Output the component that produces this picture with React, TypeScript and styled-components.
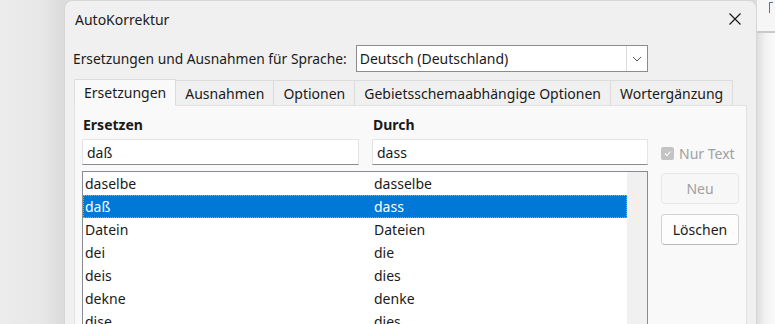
import React from "react";
import styled, { createGlobalStyle } from "styled-components";

const Global = createGlobalStyle`
  html, body { margin: 0; padding: 0; }
  body {
    width: 775px; height: 324px; overflow: hidden;
    font-family: "Noto Sans", "Open Sans", sans-serif;
    font-size: 14px; color: #1a1a1a;
    background: #ebebeb;
  }
`;

const Page = styled.div`
  display: flex;
  width: 775px;
  height: 324px;
  overflow: hidden;
  background: linear-gradient(90deg, #ececec 0px, #e8e8e8 40px, #dcdcdc 62px);
`;

const LeftGap = styled.div`
  width: 64px;
  flex: none;
`;

const Dialog = styled.div`
  width: 693px;
  flex: none;
  height: 340px;
  background: #f0f0f0;
  border: 1px solid #d6d6d6;
  border-bottom: none;
  border-radius: 8px 8px 0 0;
  box-sizing: border-box;
  display: flex;
  flex-direction: column;
`;

const Backdrop = styled.div`
  flex: 1;
  display: flex;
  flex-direction: column;
  background: linear-gradient(90deg, #dedede 0px, #f2f2f2 8px, #fafafa 18px);
`;

const BackdropTop = styled.div`
  height: 33px;
  border-bottom: 2px solid #c9c9c9;
  background: #f6f6f6;
  display: flex;
  justify-content: flex-end;
  padding: 2px 2px 0 0;
  box-sizing: border-box;
`;

const BlueMark = styled.div`
  width: 3px;
  height: 10px;
  border-left: 1px solid #3a78c8;
  border-top: 1px solid #3a78c8;
`;

const TitleBar = styled.div`
  height: 36px;
  display: flex;
  align-items: center;
  justify-content: space-between;
  padding: 0 14px 0 10px;
  flex: none;
`;

const Title = styled.span`
  font-size: 14px;
  color: #1a1a1a;
`;

const CloseBtn = styled.span`
  display: flex;
  width: 14px;
  height: 14px;
`;

const Body = styled.div`
  padding: 8px 9px 0 9px;
  display: flex;
  flex-direction: column;
`;

const LangRow = styled.div`
  display: flex;
  align-items: center;
  gap: 9px;
  height: 27px;
`;

const LangLabel = styled.span`
  font-size: 13.8px;
  margin-left: -1px;
`;

const Select = styled.div`
  width: 292px;
  height: 27px;
  box-sizing: border-box;
  border: 1px solid #8c8c8c;
  background: #fff;
  display: flex;
  align-items: stretch;
`;

const SelectText = styled.span`
  flex: 1;
  padding-left: 3px;
  display: flex;
  align-items: center;
`;

const SelectBtn = styled.span`
  width: 20px;
  border-left: 1px solid #dadada;
  display: flex;
  align-items: center;
  justify-content: center;
`;

const Tabs = styled.div`
  display: flex;
  margin-top: 8px;
  height: 25px;
  align-items: flex-end;
`;

const Tab = styled.div<{ $active?: boolean }>`
  height: ${(p) => (p.$active ? 27 : 25)}px;
  box-sizing: border-box;
  padding: 0 9px;
  display: flex;
  align-items: center;
  border: 1px solid #dcdcdc;
  border-left: ${(p) => (p.$active ? "1px solid #dcdcdc" : "none")};
  border-bottom: ${(p) => (p.$active ? "1px solid #f9f9f9" : "none")};
  background: ${(p) => (p.$active ? "#f9f9f9" : "#f0f0f0")};
  margin-bottom: ${(p) => (p.$active ? -1 : 0)}px;
  position: relative;
  z-index: ${(p) => (p.$active ? 1 : 0)};
`;

const Panel = styled.div`
  width: 673px;
  height: 240px;
  box-sizing: border-box;
  border: 1px solid #e2e2e2;
  background: #f9f9f9;
  padding: 7px 0 0 7px;
  display: flex;
  gap: 13px;
`;

const Main = styled.div`
  width: 566px;
  display: flex;
  flex-direction: column;
`;

const Cols = styled.div`
  display: grid;
  grid-template-columns: 277px 276px;
  column-gap: 13px;
`;

const Label = styled.div`
  font-weight: 700;
  height: 22px;
  display: flex;
  align-items: center;
  padding-left: 1px;
`;

const Input = styled.div`
  margin-top: 4px;
  height: 26px;
  box-sizing: border-box;
  background: #fff;
  border: 1px solid #e4e4e4;
  border-bottom: 1px solid #8a8a8a;
  padding-left: 4px;
  display: flex;
  align-items: center;
`;

const List = styled.div`
  margin-top: 6px;
  height: 200px;
  box-sizing: border-box;
  border: 1px solid #8b8b93;
  background: #fff;
  display: flex;
`;

const Rows = styled.div`
  flex: 1;
  display: flex;
  flex-direction: column;
`;

const Row = styled.div<{ $sel?: boolean }>`
  height: 23px;
  flex: none;
  display: grid;
  grid-template-columns: 289px 1fr;
  align-items: center;
  box-sizing: border-box;
  padding-left: 2px;
  background: ${(p) => (p.$sel ? "#0078d7" : "transparent")};
  color: ${(p) => (p.$sel ? "#fff" : "#1a1a1a")};
  outline: ${(p) => (p.$sel ? "1px dotted #e89a3c" : "none")};
  outline-offset: -1px;
`;

const Scroll = styled.div`
  width: 20px;
  background: #f0f0f0;
`;

const Side = styled.div`
  width: 78px;
  display: flex;
  flex-direction: column;
  padding-top: 30px;
`;

const Check = styled.div`
  display: flex;
  align-items: center;
  gap: 5px;
  height: 20px;
  color: #a0a0a0;
`;

const Box = styled.span`
  width: 13px;
  height: 13px;
  border-radius: 2px;
  background: #c4c4c4;
  display: flex;
  align-items: center;
  justify-content: center;
`;

const Button = styled.div<{ $disabled?: boolean }>`
  height: 31px;
  box-sizing: border-box;
  border-radius: 4px;
  border: 1px solid ${(p) => (p.$disabled ? "#e6e6e6" : "#d2d2d2")};
  border-bottom-color: ${(p) => (p.$disabled ? "#e6e6e6" : "#b8b8b8")};
  background: ${(p) => (p.$disabled ? "#f7f7f7" : "#fdfdfd")};
  color: ${(p) => (p.$disabled ? "#a0a0a0" : "#1a1a1a")};
  display: flex;
  align-items: center;
  justify-content: center;
  margin-top: 10px;
`;

const rows: [string, string][] = [
  ["daselbe", "dasselbe"],
  ["daß", "dass"],
  ["Datein", "Dateien"],
  ["dei", "die"],
  ["deis", "dies"],
  ["dekne", "denke"],
  ["dise", "dies"],
  ["dne", "den"],
];

export default function App() {
  return (
    <>
      <Global />
      <Page>
        <LeftGap />
        <Dialog>
          <TitleBar>
            <Title>AutoKorrektur</Title>
            <CloseBtn>
              <svg width="14" height="14" viewBox="0 0 14 14">
                <path d="M1.5 1.5 L12.5 12.5 M12.5 1.5 L1.5 12.5" stroke="#1a1a1a" strokeWidth="1.2" />
              </svg>
            </CloseBtn>
          </TitleBar>
          <Body>
            <LangRow>
              <LangLabel>Ersetzungen und Ausnahmen für Sprache:</LangLabel>
              <Select>
                <SelectText>Deutsch (Deutschland)</SelectText>
                <SelectBtn>
                  <svg width="10" height="6" viewBox="0 0 10 6">
                    <path d="M1 1 L5 5 L9 1" fill="none" stroke="#555" strokeWidth="1" />
                  </svg>
                </SelectBtn>
              </Select>
            </LangRow>
            <Tabs>
              <Tab $active>Ersetzungen</Tab>
              <Tab>Ausnahmen</Tab>
              <Tab>Optionen</Tab>
              <Tab>Gebietsschemaabhängige Optionen</Tab>
              <Tab>Wortergänzung</Tab>
            </Tabs>
            <Panel>
              <Main>
                <Cols>
                  <Label>Ersetzen</Label>
                  <Label>Durch</Label>
                  <Input>daß</Input>
                  <Input>dass</Input>
                </Cols>
                <List>
                  <Rows>
                    {rows.map(([a, b], i) => (
                      <Row key={a} $sel={i === 1}>
                        <span>{a}</span>
                        <span>{b}</span>
                      </Row>
                    ))}
                  </Rows>
                  <Scroll />
                </List>
              </Main>
              <Side>
                <Check>
                  <Box>
                    <svg width="9" height="9" viewBox="0 0 9 9">
                      <path d="M2 4.5 L4 6.5 L7.5 2.5" fill="none" stroke="#fff" strokeWidth="1.1" />
                    </svg>
                  </Box>
                  Nur Text
                </Check>
                <Button $disabled>Neu</Button>
                <Button>Löschen</Button>
              </Side>
            </Panel>
          </Body>
        </Dialog>
        <Backdrop>
          <BackdropTop>
            <BlueMark />
          </BackdropTop>
        </Backdrop>
      </Page>
    </>
  );
}
